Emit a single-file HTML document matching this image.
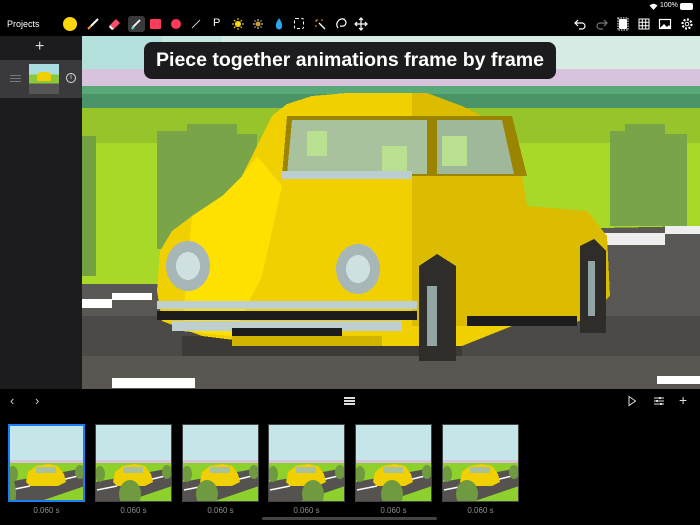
<!DOCTYPE html>
<html><head><meta charset="utf-8"><style>
*{margin:0;padding:0;box-sizing:border-box}
body{width:700px;height:525px;background:#000;position:relative;overflow:hidden;font-family:"Liberation Sans",sans-serif;color:#fff}
.a{position:absolute}
.ic{position:absolute;top:17px;width:14px;height:14px}
.th{position:absolute;top:424px;width:77px;height:78px;overflow:hidden;border:1px solid #444}
.lb{position:absolute;top:506px;width:77px;text-align:center;font-size:8px;color:#8e8e93}
</style></head><body>
<!-- status -->
<div class="a" style="left:660px;top:2px;font-size:7px">100%</div>
<div class="a" style="left:680px;top:3px;width:13px;height:7px;background:#fff;border-radius:2px"></div>
<svg class="a" style="left:649px;top:3px" width="9" height="7"><path d="M0.5 2.5Q4.5-1 8.5 2.5L4.5 7Z" fill="#fff"/></svg>
<div class="a" style="left:7px;top:19px;font-size:9px">Projects</div>
<!-- toolbar icons -->
<div class="a" style="left:63px;top:17px;width:14px;height:14px;border-radius:50%;background:#ffd60a"></div>
<svg class="ic" style="left:86px" viewBox="0 0 14 14"><path d="M12 2L5 9" stroke="#fff" stroke-width="2"/><path d="M5 9L2 12" stroke="#f0a030" stroke-width="2"/></svg>
<svg class="ic" style="left:108px" viewBox="0 0 14 14"><path d="M8 2L12 6 6 12 2 8Z" fill="#ff4d6d"/><path d="M2 8L6 12 4 13 1 10Z" fill="#fff"/></svg>
<div class="a" style="left:128px;top:16px;width:17px;height:16px;background:#3a3a3c;border-radius:3px"></div>
<svg class="ic" style="left:129px" viewBox="0 0 14 14"><path d="M11 3L4 10 3 12" stroke="#fff" stroke-width="1.8" fill="none"/><path d="M3 12L5 10" stroke="#4cc" stroke-width="2"/></svg>
<div class="a" style="left:150px;top:19px;width:11px;height:10px;background:#ff3b5c;border-radius:1px"></div>
<div class="a" style="left:171px;top:19px;width:10px;height:10px;background:#ff3b5c;border-radius:50%"></div>
<svg class="ic" style="left:189px" viewBox="0 0 14 14"><path d="M3 11L11 3" stroke="#ccc" stroke-width="1"/></svg>
<div class="a" style="left:213px;top:17px;font-size:11px">P</div>
<svg class="ic" style="left:231px" viewBox="0 0 14 14"><circle cx="7" cy="7" r="3" fill="#ffd60a"/><path d="M7 1v2M7 11v2M1 7h2M11 7h2M3 3l1.5 1.5M11 11l-1.5-1.5M3 11l1.5-1.5M11 3l-1.5 1.5" stroke="#ffd60a"/></svg>
<svg class="ic" style="left:251px" viewBox="0 0 14 14"><circle cx="7" cy="7" r="2.5" fill="#c8a030"/><path d="M7 2v2M7 10v2M2 7h2M10 7h2M3.5 3.5l1 1M10.5 10.5l-1-1M3.5 10.5l1-1M10.5 3.5l-1 1" stroke="#eee"/></svg>
<svg class="ic" style="left:272px" viewBox="0 0 14 14"><path d="M7 1Q11 7 10 9.5A3 3 0 0 1 4 9.5Q3 7 7 1Z" fill="#2aa8e8"/></svg>
<div class="a" style="left:294px;top:18px;width:10px;height:11px;border:1px dashed #fff;border-radius:2px"></div>
<svg class="ic" style="left:313px" viewBox="0 0 14 14"><path d="M6 6L12 12" stroke="#fff" stroke-width="1.3"/><path d="M4 2v2M2 4h2M9 2v2M2 9h2" stroke="#f0a020"/></svg>
<svg class="ic" style="left:334px" viewBox="0 0 14 14"><path d="M4 11Q1 7 5 3Q10 0 12 5Q12 10 6 9" stroke="#fff" fill="none" stroke-width="1.2"/></svg>
<svg class="ic" style="left:354px" viewBox="0 0 14 14"><path d="M7 1v12M1 7h12M5 3l2-2 2 2M5 11l2 2 2-2M3 5L1 7l2 2M11 5l2 2-2 2" stroke="#fff" fill="none" stroke-width="1.2"/></svg>
<svg class="ic" style="left:573px" viewBox="0 0 14 14"><path d="M5 3L2 6l3 3M2 6h7a3 3 0 0 1 0 6H6" stroke="#fff" fill="none" stroke-width="1.2"/></svg>
<svg class="ic" style="left:595px" viewBox="0 0 14 14"><path d="M9 3l3 3-3 3M12 6H5a3 3 0 0 0 0 6h3" stroke="#777" fill="none" stroke-width="1.2"/></svg>
<svg class="ic" style="left:616px" viewBox="0 0 14 14"><rect x="3" y="2" width="8" height="10" fill="#fff" rx="1"/><rect x="2" y="1" width="10" height="12" stroke="#fff" fill="none" stroke-dasharray="1.5 1"/></svg>
<svg class="ic" style="left:637px" viewBox="0 0 14 14"><path d="M2 2h10v10H2zM5.3 2v10M8.7 2v10M2 5.3h10M2 8.7h10" stroke="#fff" fill="none"/></svg>
<svg class="ic" style="left:658px" viewBox="0 0 14 14"><rect x="1.5" y="2.5" width="11" height="9" stroke="#fff" fill="none" stroke-width="1.2"/><path d="M2 11l4-4 3 3 2-2 2 3Z" fill="#fff"/></svg>
<svg class="ic" style="left:680px" viewBox="0 0 14 14"><circle cx="7" cy="7" r="4.5" stroke="#fff" fill="none" stroke-width="2.2" stroke-dasharray="2 1.5"/><circle cx="7" cy="7" r="1.8" stroke="#fff" fill="none"/></svg>
<!-- left panel -->
<div class="a" style="left:0;top:36px;width:82px;height:353px;background:#1c1c1e"></div>
<div class="a" style="left:35px;top:38px;font-size:16px;color:#ddd">+</div>
<div class="a" style="left:0;top:60px;width:82px;height:38px;background:#3a3a3c"></div>
<div class="a" style="left:10px;top:75px;width:11px;height:1px;background:#777;box-shadow:0 3px #777,0 6px #777"></div>
<div class="a" style="left:29px;top:64px;width:30px;height:30px;background:linear-gradient(#aadde0 0 35%,#8cc83a 35% 65%,#555 65%)"><div class="a" style="left:8px;top:8px;width:14px;height:9px;background:#f0d000;border-radius:4px 4px 1px 1px"></div></div>
<div class="a" style="left:66px;top:73px;width:10px;height:10px;border:1px solid #ddd;border-radius:50%;font-size:7px;text-align:center;line-height:8px;color:#ddd">i</div>
<!-- canvas -->
<svg class="a" style="left:82px;top:36px" width="618" height="353" viewBox="0 0 618 353" shape-rendering="crispEdges">
<rect width="618" height="353" fill="#d8ece6"/>
<rect width="80" height="34" fill="#b4e0dc"/>
<rect x="80" width="60" height="20" fill="#c6e6e0"/>
<rect y="33" width="618" height="17" fill="#d8c3dc"/>
<rect y="50" width="618" height="22" fill="#59a877"/>
<rect y="58" width="618" height="14" fill="#4a9468"/>
<rect y="72" width="618" height="280" fill="#a8d828"/>
<rect y="72" width="618" height="35" fill="#96c42a"/>
<rect x="0" y="100" width="14" height="140" fill="#73a040"/>
<path d="M75 95h30v-7h50v10h20v115h-100z" fill="#7aa448"/>
<path d="M528 95h15v-7h40v10h22v92h-77z" fill="#7aa448"/>
<path d="M0 248L75 248 520 192 618 190V353H0Z" fill="#5a5855"/>
<rect y="280" width="618" height="73" fill="#4c4a47"/>
<rect y="320" width="618" height="33" fill="#5a5752"/>
<rect x="0" y="263" width="30" height="9" fill="#fff"/>
<rect x="30" y="257" width="40" height="7" fill="#fff"/>
<rect x="520" y="197" width="63" height="12" fill="#eee"/>
<rect x="583" y="190" width="35" height="8" fill="#eee"/>
<rect x="30" y="342" width="83" height="10" fill="#fff"/>
<rect x="575" y="340" width="43" height="8" fill="#fff"/>
<rect x="100" y="300" width="280" height="20" fill="#3c3a37"/>
<!-- car -->
<path d="M75 255L78 215 90 195 110 180 140 160 160 140 175 110 190 80 205 68 230 60 265 57 345 57 380 70 420 90 440 140 445 170 505 175 525 200 528 260 500 285 430 290 380 310 300 310 200 310 120 300 80 285Z" fill="#f0d000"/>
<path d="M330 57L345 57 380 70 420 90 440 140 445 170 505 175 525 200 528 260 500 285 380 290 330 290Z" fill="#dcbc00"/>
<path d="M110 180L140 160 160 140 175 120 200 150 180 240 150 300 100 295Z" fill="#ffe100"/>
<path d="M205 80H430L445 140H200Z" fill="#9a8400"/>
<path d="M210 84H345V138H205Z" fill="#a9c29d"/>
<path d="M355 84H420L432 138H355Z" fill="#9fb89a"/>
<path d="M225 95h20v25h-20zM300 110h25v25h-25zM360 100h25v30h-25z" fill="#b8e090"/>
<rect x="200" y="135" width="130" height="8" fill="#bccdcf"/>
<ellipse cx="106" cy="230" rx="22" ry="25" fill="#a7b7b8"/><ellipse cx="106" cy="230" rx="12" ry="14" fill="#cfe0e0"/>
<ellipse cx="276" cy="233" rx="22" ry="25" fill="#a7b7b8"/><ellipse cx="276" cy="233" rx="12" ry="14" fill="#cfe0e0"/>
<path d="M337 230L355 218 374 230V325H337Z" fill="#2e2d2a"/><rect x="345" y="250" width="10" height="60" fill="#93a4a5"/>
<path d="M498 210L512 203 524 215V297H498Z" fill="#2e2d2a"/><rect x="506" y="225" width="7" height="55" fill="#93a4a5"/>
<rect x="75" y="265" width="260" height="8" fill="#bfcfd0"/>
<rect x="75" y="275" width="260" height="9" fill="#1c1c1c"/>
<rect x="90" y="285" width="230" height="10" fill="#bfcfd0"/>
<rect x="150" y="292" width="110" height="8" fill="#1c1c1c"/>
<rect x="150" y="300" width="150" height="10" fill="#d0b400"/>
<rect x="385" y="280" width="110" height="10" fill="#1c1c1c"/>
</svg>
<div class="a" style="left:144px;top:42px;width:412px;height:37px;background:#1c1c1e;border-radius:8px;font-size:19.5px;font-weight:bold;line-height:37px;text-align:center;color:#fff;white-space:nowrap">Piece together animations frame by frame</div>
<!-- bottom -->
<div class="a" style="left:10px;top:393px;font-size:13px;color:#ccc">‹</div>
<div class="a" style="left:35px;top:393px;font-size:13px;color:#ccc">›</div>
<div class="a" style="left:344px;top:397px;width:11px;height:1.5px;background:#ddd;box-shadow:0 3px #ddd,0 6px #ddd"></div>
<svg class="a" style="left:627px;top:395px" width="10" height="12"><path d="M2 1.5L8.5 6 2 10.5Z" stroke="#ddd" fill="none"/></svg>
<svg class="a" style="left:653px;top:395px" width="12" height="12"><path d="M1 3h10M1 6h10M1 9h10" stroke="#ddd"/><rect x="6" y="2" width="2" height="2" fill="#ddd"/><rect x="3" y="5" width="2" height="2" fill="#ddd"/><rect x="7" y="8" width="2" height="2" fill="#ddd"/></svg>
<div class="a" style="left:679px;top:392px;font-size:14px;color:#ddd">+</div>
<div id="ths"></div>
<div class="a" style="left:262px;top:517px;width:175px;height:3px;border-radius:2px;background:#444"></div>
<script>
var xs=[8,95,182,268,355,442],h='';
xs.forEach(function(x,i){
var b=i==0?'border:2px solid #1a7ff5;':'';
var bush=[[12,70],[30,60],[60,50],[8,70],[32,62],[55,50]][i];
h+='<div class="th" style="left:'+x+'px;'+b+'"><svg width="77" height="78" viewBox="0 0 77 78" style="position:absolute;left:'+(i==0?-2:-1)+'px;top:'+(i==0?-2:-1)+'px"><rect width="77" height="78" fill="#c4e6e8"/><rect y="38" width="77" height="40" fill="#8ed02c"/><rect y="36" width="77" height="3" fill="#d8c3dc"/><path d="M0 58L77 44V62L30 78H0Z" fill="#55524f"/><path d="M2 66l20-4M45 58l25-6" stroke="#fff" stroke-width="1.5"/><ellipse cx="5" cy="50" rx="5" ry="8" fill="#6f9a40"/><ellipse cx="72" cy="48" rx="5" ry="7" fill="#6f9a40"/><path d="M18 58L20 48 28 42 40 40 50 42 56 50 58 58 50 62 22 62Z" fill="#f0d000"/><rect x="28" y="43" width="20" height="6" fill="#a9c29d"/><ellipse cx="'+(i==0?4:bush[1]-25)+'" cy="70" rx="'+(i==0?4:11)+'" ry="14" fill="#6f9a40"/></svg></div><div class="lb" style="left:'+x+'px">0.060 s</div>';});
document.getElementById('ths').innerHTML=h;
</script>
</body></html>
